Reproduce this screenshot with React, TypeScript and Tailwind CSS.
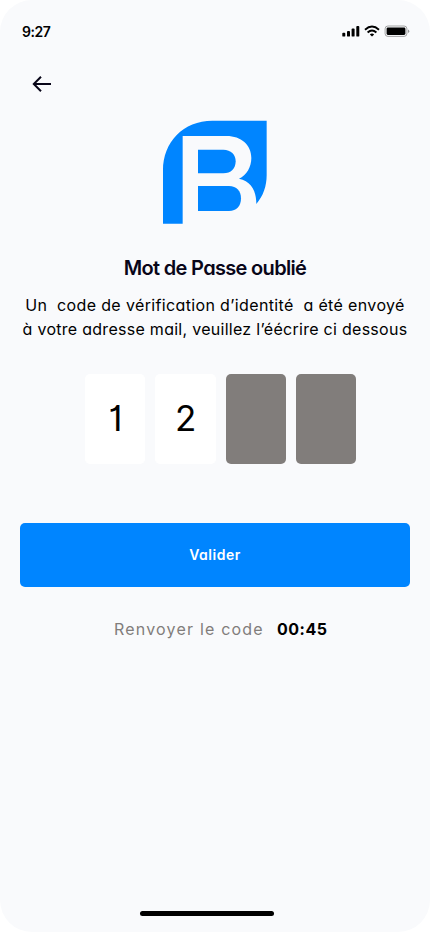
function StatusIcons() {
  return (
    <svg className="h-3 w-[68px]" viewBox="0 0 68 12" fill="none">
      <g fill="#000">
        <rect x="0.3" y="7.8" width="3" height="3.8" rx="0.9" />
        <rect x="5" y="6" width="3" height="5.6" rx="0.9" />
        <rect x="9.6" y="3.6" width="3" height="8" rx="0.9" />
        <rect x="14.3" y="1" width="3" height="10.6" rx="0.9" />
      </g>
      <g stroke="#000" strokeWidth="1.9">
        <path d="M23 4.7Q30 -1.5 37 4.7" />
        <path d="M25.6 7.5Q30 3.5 34.4 7.5" />
      </g>
      <path d="M27.8 9.4Q30 7.7 32.2 9.4L30 11.6Z" fill="#000" />
      <rect x="43.1" y="1" width="21.8" height="10.4" rx="2.8" stroke="#000" strokeOpacity="0.35" />
      <path d="M66 4.5v3.6q1.3-.6 1.3-1.8T66 4.5Z" fill="#000" fillOpacity="0.4" />
      <rect x="44.6" y="2.5" width="18.8" height="7.4" rx="1.3" fill="#000" />
    </svg>
  );
}

function Logo() {
  return (
    <svg className="h-[104px] w-[105px]" viewBox="24 24 315 312" fill="#0085ff">
      <path d="M24 335V175C24 90 85 26 172 26H335V190C335 222 325 252 304 276C304 235 288 208 252 200C275 190 289 165 289 138C289 98 258 72 215 72H83V335Z" />
      <path d="M129 113H205C228 113 242 128 242 148C242 170 228 184 205 184H129Z" />
      <path d="M129 222H222C245 222 258 237 258 259C258 282 245 297 222 297H129Z" />
    </svg>
  );
}

const digits = ["1", "2", "", ""];

export default function App() {
  return (
    <div className="h-[932px] w-[430px] bg-white font-['Inter',sans-serif] [font-feature-settings:'cv11','cv01']">
      <main className="flex h-full flex-col overflow-hidden rounded-[32px] bg-[#f9fafc] text-black">
        <header className="flex h-[62px] items-center justify-between pr-5 pl-[22px]">
          <span className="pt-px text-[14px] leading-5 font-semibold tracking-[-0.45px]">9:27</span>
          <StatusIcons />
        </header>

        <button className="ml-[30px] flex h-11 w-6 items-center justify-center" aria-label="Retour">
          <svg className="h-5 w-6" viewBox="0 0 24 20" fill="none" stroke="#090619" strokeWidth="2">
            <path d="M21 10H4M11 2.8L3.8 10L11 17.2" />
          </svg>
        </button>

        <div className="mt-[14px] ml-[163px] h-[104px]">
          <Logo />
        </div>

        <h1 className="mt-7 text-center text-[20px] leading-8 font-semibold tracking-[-0.68px] whitespace-nowrap text-[#090619]">
          Mot de Passe oublié
        </h1>
        <div className="mt-[9px] flex flex-col items-center text-[16px] leading-6 whitespace-pre">
          <p className="tracking-[0.36px]">{"Un  code de vérification d’identité  a été envoyé"}</p>
          <p className="tracking-[0.28px]">à votre adresse mail, veuillez l’éécrire ci dessous</p>
        </div>

        <div className="mt-[33px] ml-[85.3px] flex gap-[10px]">
          {digits.map((digit, i) => (
            <div
              key={i}
              className={`flex h-[90px] w-[60.2px] items-center justify-center rounded-[5px] pb-px text-[35px] ${digit ? "bg-white" : "bg-[#817d7b]"}`}
            >
              {digit}
            </div>
          ))}
        </div>

        <button className="mx-5 mt-[59px] h-16 rounded-[5px] bg-[#0085ff] pb-0.5 text-[14px] font-semibold tracking-[0.5px] text-white">
          Valider
        </button>

        <div className="mt-[30px] ml-[114px] flex h-6 items-center text-[16px] whitespace-nowrap">
          <span className="w-[163px] tracking-[1.2px] text-[#817d7b]">Renvoyer le code</span>
          <span className="font-bold tracking-[0.5px]">00:45</span>
        </div>

        <div className="mt-auto mb-4 ml-[140px] h-[5px] w-[134px] rounded-full bg-black" />
      </main>
    </div>
  );
}
